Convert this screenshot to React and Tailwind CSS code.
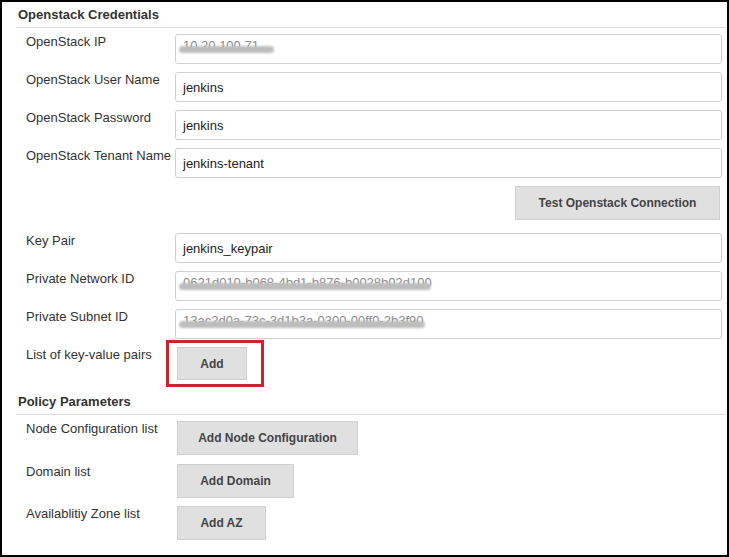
const font = { fontFamily: '"Liberation Sans", Arial, sans-serif' }

function SectionHeader({ children, className = '' }) {
  return (
    <div className={`border-b border-[#dcdcdc] pl-[2px] pb-[4px] text-[13px] leading-[16px] font-bold text-[#333] ${className}`}>
      {children}
    </div>
  )
}

function Row({ label, children, className = 'mt-2' }) {
  return (
    <div className={`flex items-start ${className}`}>
      <div className="w-[159px] shrink-0 pl-[10px] text-[13px] leading-[16px] text-[#333]">{label}</div>
      <div className="flex-1">{children}</div>
    </div>
  )
}

function TextField({ value, blur }) {
  return (
    <div className="relative h-[30px] w-[547px] rounded-[3px] border border-[#cfcfcf] bg-white pl-[7px] flex items-center text-[13px] text-[#222] overflow-hidden">
      <span className={blur ? 'text-[#8a8a8a] -mt-[6px]' : 'mt-[2px]'}>{value}</span>
      {blur && (
        <span
          className="absolute top-[11px] left-[3px] h-[7px] rounded-full bg-[#bdbdbd] blur-[1px]"
          style={{ width: blur }}
        />
      )}
    </div>
  )
}

function Btn({ children, w, h = 'h-[34px]' }) {
  return (
    <button className={`${w} ${h} border border-[#d0d0d0] bg-[#e0e0e0] text-[12px] font-bold text-[#444]`}>
      {children}
    </button>
  )
}

export default function App() {
  return (
    <div style={font} className="w-[729px] h-[557px] border-2 border-black bg-white overflow-hidden">
      <div className="pl-[14px] pr-[1px]">
        <SectionHeader className="mt-[5px]">Openstack Credentials</SectionHeader>

        <Row label="OpenStack IP" className="mt-[6px]"><TextField value="10.20.100.71" blur="95px" /></Row>
        <Row label="OpenStack User Name"><TextField value="jenkins" /></Row>
        <Row label="OpenStack Password"><TextField value="jenkins" /></Row>
        <Row label="OpenStack Tenant Name"><TextField value="jenkins-tenant" /></Row>

        <div className="mt-2 flex justify-end pr-[6px]">
          <Btn w="w-[205px]">Test Openstack Connection</Btn>
        </div>

        <Row label="Key Pair" className="mt-[13px]"><TextField value="jenkins_keypair" /></Row>
        <Row label="Private Network ID"><TextField value="0621d010-b068-4bd1-b876-b0028b02d100" blur="252px" /></Row>
        <Row label="Private Subnet ID"><TextField value="13ac2d0a-73c-3d1b3a-0300-00ff0-2b3f90" blur="246px" /></Row>

        <Row label="List of key-value pairs">
          <div className="relative ml-[2px] w-[70px]">
            <Btn w="w-[70px]" h="h-[33px]">Add</Btn>
            <div className="absolute -left-[11px] -top-[7px] w-[98px] h-[47px] border-[3px] border-[#c8262e]" />
          </div>
        </Row>

        <SectionHeader className="mt-[14px]">Policy Parameters</SectionHeader>

        <Row label="Node Configuration list" className="mt-[6px]">
          <div className="ml-[2px]"><Btn w="w-[181px]">Add Node Configuration</Btn></div>
        </Row>
        <Row label="Domain list" className="mt-[9px]">
          <div className="ml-[2px]"><Btn w="w-[117px]">Add Domain</Btn></div>
        </Row>
        <Row label="Availablitiy Zone list" className="mt-2">
          <div className="ml-[2px]"><Btn w="w-[89px]">Add AZ</Btn></div>
        </Row>
      </div>
    </div>
  )
}
